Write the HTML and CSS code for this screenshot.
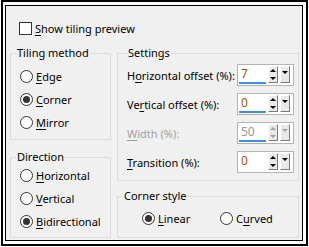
FILE: index.html
```html
<!DOCTYPE html>
<html lang="en">
<head>
    <meta charset="UTF-8">
    <title>Tiling</title>
    <link rel="stylesheet" href="styles.css">
</head>
<body>

    <div class="frame">
        <div class="panel">
            <label class="check"><span class="box"></span><span><u>S</u>how tiling preview</span></label>

            <div class="columns">
                <div class="col">
                    <fieldset class="group tiling">
                        <legend>Tiling method</legend>
                        <label class="radio"><span class="dot"></span><span><u>E</u>dge</span></label>
                        <label class="radio"><span class="dot on"></span><span><u>C</u>orner</span></label>
                        <label class="radio"><span class="dot"></span><span><u>M</u>irror</span></label>
                    </fieldset>
                    <fieldset class="group direction">
                        <legend>Direction</legend>
                        <label class="radio"><span class="dot"></span><span><u>H</u>orizontal</span></label>
                        <label class="radio"><span class="dot"></span><span><u>V</u>ertical</span></label>
                        <label class="radio"><span class="dot on"></span><span><u>B</u>idirectional</span></label>
                    </fieldset>
                </div>

                <div class="col">
                    <fieldset class="group settings">
                        <legend>Settings</legend>
                        <div class="row">
                            <span>H<u>o</u>rizontal offset (%):</span>
                            <div class="spin"><span class="val">7</span><span class="updown"></span><span class="drop"></span></div>
                        </div>
                        <div class="row">
                            <span>Ve<u>r</u>tical offset (%):</span>
                            <div class="spin"><span class="val">0</span><span class="updown"></span><span class="drop"></span></div>
                        </div>
                        <div class="row disabled">
                            <span><u>W</u>idth (%):</span>
                            <div class="spin"><span class="val">50</span><span class="updown"></span><span class="drop"></span></div>
                        </div>
                        <div class="row">
                            <span><u>T</u>ransition (%):</span>
                            <div class="spin"><span class="val plain">0</span><span class="updown"></span><span class="drop"></span></div>
                        </div>
                    </fieldset>
                    <fieldset class="group corner">
                        <legend>Corner style</legend>
                        <div class="radios">
                            <label class="radio"><span class="dot on"></span><span><u>L</u>inear</span></label>
                            <label class="radio"><span class="dot"></span><span>C<u>u</u>rved</span></label>
                        </div>
                    </fieldset>
                </div>
            </div>
        </div>
    </div>

</body>
</html>
```

FILE: styles.css
```css
body {
    margin: 0;
    background-color: #fff;
    font-family: "Noto Sans", "Open Sans", sans-serif;
    font-size: 11px;
    color: #000;
}
u {
    text-decoration-thickness: 1px;
    text-underline-offset: 2px;
}
.frame {
    width: 307px;
    height: 246px;
    box-sizing: border-box;
    margin-left: 1px;
    border: 2px solid #000;
    padding: 3px 3px 3px 2px;
    background-color: #fff;
}
.panel {
    height: 100%;
    box-sizing: border-box;
    border: 1px solid #000;
    background-color: #f0f0f0;
    padding: 15px 3px 0 4px;
}

/* checkbox */
.check {
    display: flex;
    align-items: center;
    gap: 3px;
    height: 15px;
    margin-left: 9px;
    white-space: nowrap;
}
.box {
    width: 13px;
    height: 13px;
    box-sizing: border-box;
    border: 1px solid #333;
    background-color: #fff;
}

/* columns */
.columns {
    display: grid;
    grid-template-columns: 101px 182px;
    column-gap: 6px;
    margin-top: 10px;
}
.col {
    display: flex;
    flex-direction: column;
}
.group {
    margin: 0;
    padding: 0 0 0 5px;
    min-width: 0;
    box-sizing: border-box;
    border: 1px solid #dcdcdc;
}
.group legend {
    padding: 0 1px;
    line-height: 14px;
}
.tiling {
    height: 94px;
    padding-top: 5px;
}
.direction {
    height: 88px;
    margin-top: 10px;
}
.settings {
    height: 135px;
    padding: 4px 4px 0 9px;
}
.corner {
    height: 49px;
    margin-top: 8px;
    padding-top: 4px;
}

/* radios */
.radio {
    display: flex;
    align-items: center;
    gap: 3px;
    height: 23px;
    padding-left: 4px;
    white-space: nowrap;
}
.dot {
    width: 13px;
    height: 13px;
    box-sizing: border-box;
    border: 1px solid #333;
    border-radius: 50%;
    background-color: #fff;
    display: flex;
    align-items: center;
    justify-content: center;
}
.dot.on::after {
    content: "";
    width: 7px;
    height: 7px;
    border-radius: 50%;
    background-color: #333;
}
.radios {
    display: flex;
    padding-left: 19px;
}
.radios .radio {
    width: 81px;
    height: 22px;
    padding-left: 0;
}

/* spin boxes */
.row {
    display: flex;
    justify-content: space-between;
    align-items: center;
    height: 22px;
    margin-bottom: 7px;
    white-space: nowrap;
}
.disabled {
    color: #a0a0a0;
}
.spin {
    display: flex;
    align-items: flex-start;
    gap: 2px;
    width: 57px;
    height: 22px;
    box-sizing: border-box;
    border: 1px solid #b4b4b4;
    background-color: #fff;
    padding: 0 3px 0 1px;
}
.val {
    width: 28px;
    height: 19px;
    box-sizing: border-box;
    border-bottom: 2px solid #3d8ee6;
    padding-left: 2px;
    line-height: 18px;
    font-size: 12px;
    color: #a65600;
}
.val.plain {
    border-bottom-color: transparent;
}
.disabled .val {
    color: #999;
}
.updown, .drop {
    position: relative;
    width: 10px;
    height: 17px;
    margin-top: 1px;
    box-sizing: border-box;
    border: 1px solid;
    border-color: #fff #7a7a7a #7a7a7a #fff;
    background-color: #e9e9e9;
}
.updown::before, .updown::after, .drop::after {
    content: "";
    position: absolute;
    left: 1px;
    border-left: 3px solid transparent;
    border-right: 3px solid transparent;
}
.updown::before {
    top: 2px;
    border-bottom: 3px solid #000;
}
.updown::after {
    bottom: 2px;
    border-top: 3px solid #000;
}
.drop::after {
    top: 4px;
    border-top: 3px solid #000;
}
.disabled .updown::before {
    border-bottom-color: #a0a0a0;
}
.disabled .updown::after, .disabled .drop::after {
    border-top-color: #a0a0a0;
}
```
